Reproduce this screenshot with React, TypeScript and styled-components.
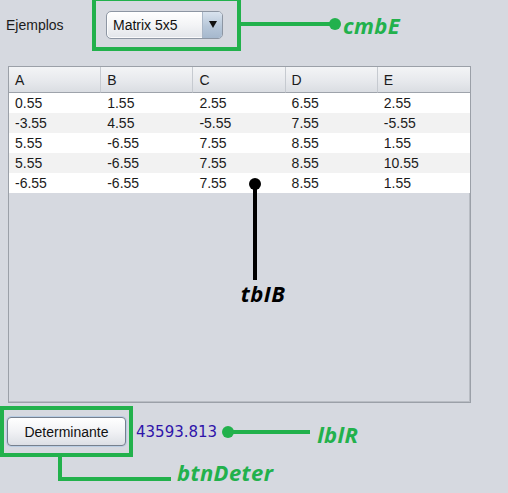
import React, { FC } from 'react'
import styled, { createGlobalStyle } from 'styled-components'

const GREEN = '#22b14c'

const GlobalStyle = createGlobalStyle`
    html, body {
        margin: 0;
        padding: 0;
        background: #d6d9e0;
    }
`

const Page = styled.div`
    width: 508px;
    height: 493px;
    overflow: hidden;
    background: #d6d9e0;
    font-family: "Liberation Sans", Arial, sans-serif;
    font-size: 14px;
    color: #1b1b1b;
`

const TopRow = styled.div`
    display: flex;
    align-items: center;
    margin-top: -3px;
    padding-left: 6px;
`

const FieldLabel = styled.span`
    width: 86px;
    padding-top: 1px;
`

// green box drawn round a control in the picture
const Frame = styled.div<{ $pad: string }>`
    border: 4px solid ${GREEN};
    padding: ${p => p.$pad};
`

const Combo = styled.div`
    display: flex;
    width: 117px;
    height: 28px;
    box-sizing: border-box;
    border: 1px solid #8d96a3;
    border-radius: 5px;
    background: linear-gradient(#ffffff, #f3f4f6 50%, #e2e5ea);
    box-shadow: inset 0 0 0 1px rgba(255, 255, 255, 0.8);
    overflow: hidden;
`

const ComboText = styled.span`
    flex: 1;
    display: flex;
    align-items: center;
    padding-left: 6px;
    color: #111;
`

const ComboArrow = styled.span`
    width: 19px;
    display: flex;
    align-items: center;
    justify-content: center;
    border-left: 1px solid #a9b6c6;
    background: linear-gradient(#d9e3ee, #b7c7d9 55%, #a5b8cd);
    &::after {
        content: '';
        border-left: 4px solid transparent;
        border-right: 4px solid transparent;
        border-top: 7px solid #111;
        margin-top: -2px;
    }
`

const Leader = styled.div<{ $w: number; $color?: string }>`
    width: ${p => p.$w}px;
    height: 4px;
    flex: none;
    background: ${p => p.$color || GREEN};
`

const Dot = styled.div<{ $color?: string }>`
    width: 12px;
    height: 12px;
    flex: none;
    border-radius: 50%;
    background: ${p => p.$color || GREEN};
`

const TopDot = styled(Dot)`
    margin-left: -6px;
`

const Tag = styled.span<{ $color?: string }>`
    font-family: "Open Sans", "DejaVu Sans", sans-serif;
    font-style: italic;
    font-weight: 700;
    font-size: 22px;
    line-height: 1;
    letter-spacing: 0.4px;
    white-space: nowrap;
    color: ${p => p.$color || GREEN};
`

const TopTag = styled(Tag)`
    margin: 2px 0 0 2px;
`

const TableBox = styled.div`
    position: relative;
    margin: 15px 0 0 8px;
    width: 463px;
    height: 337px;
    box-sizing: border-box;
    border: 1px solid #9ba0a8;
    box-shadow: inset -1px -1px 0 #b9bdc4;
    background: #d6d9e0;
`

const Grid = styled.div`
    display: grid;
    grid-template-columns: repeat(5, 1fr);
    width: 461px;
`

const HeadCell = styled.div`
    height: 25px;
    display: flex;
    align-items: center;
    padding-left: 6px;
    background: linear-gradient(#f3f4f6, #e6e8ec 60%, #dadde2);
    border-right: 1px solid #c6cad0;
    border-bottom: 1px solid #9ea3ab;
    &:nth-child(5) {
        border-right: none;
    }
`

const Cell = styled.div<{ $alt: boolean }>`
    height: 20px;
    display: flex;
    align-items: center;
    padding-left: 6px;
    background: ${p => (p.$alt ? '#f2f2f2' : '#ffffff')};
`

// black pin pointing at the table
const Pin = styled.div`
    position: absolute;
    left: 246px;
    top: 111px;
    width: 0;
    display: flex;
    flex-direction: column;
    align-items: center;
`

const Stem = styled.div`
    width: 4px;
    height: 96px;
    margin-top: -6px;
    background: #000;
`

const PinTag = styled(Tag)`
    margin: 2px 0 0 16px;
`

const BottomRow = styled.div`
    display: flex;
    align-items: center;
    margin-top: 3px;
`

const Button = styled.button`
    display: block;
    width: 119px;
    height: 29px;
    border: 1px solid #76808e;
    border-radius: 4px;
    background: linear-gradient(#ffffff, #f1f2f5 50%, #dcdfe5);
    box-shadow: 0 0 0 1px #b9cde3;
    font-family: "Liberation Sans", Arial, sans-serif;
    font-size: 14px;
    color: #111;
    padding: 0;
`

const Result = styled.span`
    margin: 0 5px 0 3px;
    font-family: "DejaVu Sans", sans-serif;
    font-size: 15px;
    color: #2f14aa;
`

const ResultLine = styled(Leader)`
    margin-left: -4px;
`

const ResultTag = styled(Tag)`
    margin: 4px 0 0 7px;
`

const ButtonNote = styled.div`
    display: flex;
    align-items: flex-end;
    margin-left: 55px;
`

const Elbow = styled.div`
    width: 109px;
    height: 21px;
    margin: -1px 6px 0 3px;
    border-left: 4px solid ${GREEN};
    border-bottom: 4px solid ${GREEN};
`

const NoteTag = styled(Tag)`
    margin-bottom: -2px;
`

const columns = ['A', 'B', 'C', 'D', 'E']
const rows = [
    ['0.55', '1.55', '2.55', '6.55', '2.55'],
    ['-3.55', '4.55', '-5.55', '7.55', '-5.55'],
    ['5.55', '-6.55', '7.55', '8.55', '1.55'],
    ['5.55', '-6.55', '7.55', '8.55', '10.55'],
    ['-6.55', '-6.55', '7.55', '8.55', '1.55'],
]

const App: FC = () => {
    return (
        <Page>
            <GlobalStyle />
            <TopRow>
                <FieldLabel>Ejemplos</FieldLabel>
                <Frame $pad="10px 14px 8px 10px">
                    <Combo>
                        <ComboText>Matrix 5x5</ComboText>
                        <ComboArrow />
                    </Combo>
                </Frame>
                <Leader $w={94} />
                <TopDot />
                <TopTag>cmbE</TopTag>
            </TopRow>

            <TableBox>
                <Grid>
                    {columns.map(c => <HeadCell key={c}>{c}</HeadCell>)}
                    {rows.map((r, i) =>
                        r.map((v, j) => <Cell key={i + '-' + j} $alt={i % 2 === 1}>{v}</Cell>)
                    )}
                </Grid>
                <Pin>
                    <Dot $color="#000" />
                    <Stem />
                    <PinTag $color="#000">tbIB</PinTag>
                </Pin>
            </TableBox>

            <BottomRow>
                <Frame $pad="7px 3px">
                    <Button>Determinante</Button>
                </Frame>
                <Result>43593.813</Result>
                <Dot />
                <ResultLine $w={80} />
                <ResultTag>lblR</ResultTag>
            </BottomRow>
            <ButtonNote>
                <Elbow />
                <NoteTag>btnDeter</NoteTag>
            </ButtonNote>
        </Page>
    )
}

export default App
